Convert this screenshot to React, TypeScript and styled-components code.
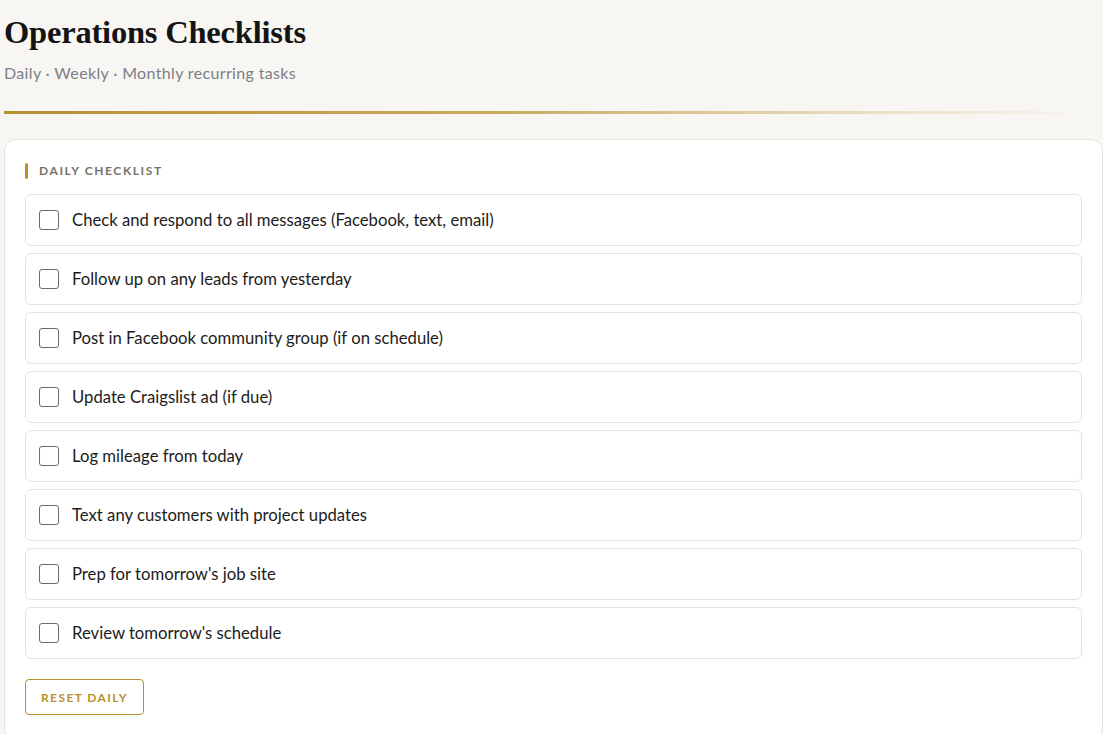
import React, { useState } from "react";
import styled, { createGlobalStyle } from "styled-components";

const GlobalStyle = createGlobalStyle`
  * { box-sizing: border-box; }
  html, body {
    margin: 0;
    padding: 0;
    background-color: #f8f6f2;
  }
  body {
    font-family: "Lato", "Noto Sans", sans-serif;
    color: #1c1c1c;
    overflow: hidden;
  }
`;

/* Page */
const Page = styled.div`
  display: flex;
  flex-direction: column;
  min-height: 100vh;
  padding: 0 0 0 4px;
`;

const Header = styled.header`
  display: flex;
  flex-direction: column;
  padding-top: 13px;
`;

const Title = styled.h1`
  margin: 0;
  font-family: "Liberation Serif", "DejaVu Serif", serif;
  font-weight: 700;
  font-size: 32.5px;
  line-height: 38px;
  color: #141414;
  letter-spacing: -0.2px;
`;

const Subtitle = styled.p`
  margin: 12px 0 0;
  font-size: 16px;
  line-height: 20px;
  letter-spacing: 0.35px;
  color: #7b7f86;
`;

const Divider = styled.div`
  height: 3px;
  margin: 28px 14px 0 0;
  background: linear-gradient(
    90deg,
    #b8902f 0%,
    #c9a95e 45%,
    rgba(220, 200, 150, 0.5) 80%,
    rgba(248, 246, 242, 0) 100%
  );
`;

/* Card */
const Card = styled.section`
  display: flex;
  flex-direction: column;
  margin-top: 25px;
  padding: 20px 20px 24px 20px;
  background-color: #fff;
  border: 1px solid #e7e3da;
  border-radius: 12px;
`;

const SectionLabel = styled.h2`
  display: flex;
  align-items: center;
  gap: 11px;
  margin: 3px 0 15px;
  font-size: 12px;
  font-weight: 700;
  letter-spacing: 1.6px;
  text-transform: uppercase;
  color: #77736b;
  line-height: 16px;

  &::before {
    content: "";
    display: block;
    width: 3px;
    height: 16px;
    border-radius: 2px;
    background-color: #b8902f;
  }
`;

const List = styled.ul`
  display: flex;
  flex-direction: column;
  gap: 7px;
  margin: 0;
  padding: 0;
  list-style: none;
`;

const Item = styled.li<{ done?: boolean }>`
  display: flex;
  align-items: center;
  gap: 13px;
  height: 52px;
  padding: 0 13px;
  border: 1px solid #e7e3da;
  border-radius: 6px;
  cursor: pointer;
  font-size: 16.7px;
  color: ${({ done }) => (done ? "#9a9a9a" : "#1c1c1c")};
  text-decoration: ${({ done }) => (done ? "line-through" : "none")};
`;

const Box = styled.span<{ checked?: boolean }>`
  display: flex;
  align-items: center;
  justify-content: center;
  width: 20px;
  height: 20px;
  flex-shrink: 0;
  border: 1.5px solid #6b6b6b;
  border-radius: 3px;
  background-color: ${({ checked }) => (checked ? "#b8902f" : "#fff")};
  border-color: ${({ checked }) => (checked ? "#b8902f" : "#6b6b6b")};
`;

const ResetButton = styled.button`
  align-self: flex-start;
  margin-top: 20px;
  height: 36px;
  padding: 0 15px;
  background: transparent;
  border: 1px solid #b8902f;
  border-radius: 4px;
  font-family: "Lato", "Noto Sans", sans-serif;
  font-size: 12px;
  font-weight: 700;
  letter-spacing: 1.4px;
  color: #b8902f;
  cursor: pointer;
`;

const tasks = [
  "Check and respond to all messages (Facebook, text, email)",
  "Follow up on any leads from yesterday",
  "Post in Facebook community group (if on schedule)",
  "Update Craigslist ad (if due)",
  "Log mileage from today",
  "Text any customers with project updates",
  "Prep for tomorrow's job site",
  "Review tomorrow's schedule",
];

export default function App() {
  const [done, setDone] = useState<boolean[]>(tasks.map(() => false));

  const toggle = (i: number) =>
    setDone((prev) => prev.map((v, j) => (j === i ? !v : v)));

  return (
    <>
      <GlobalStyle />
      <Page>
        <Header>
          <Title>Operations Checklists</Title>
          <Subtitle>Daily · Weekly · Monthly recurring tasks</Subtitle>
          <Divider />
        </Header>
        <Card>
          <SectionLabel>Daily Checklist</SectionLabel>
          <List>
            {tasks.map((t, i) => (
              <Item key={t} done={done[i]} onClick={() => toggle(i)}>
                <Box checked={done[i]}>
                  {done[i] && (
                    <svg width="12" height="12" viewBox="0 0 24 24" fill="none" stroke="#fff" strokeWidth="4" strokeLinecap="round" strokeLinejoin="round">
                      <path d="M20 6 9 17l-5-5" />
                    </svg>
                  )}
                </Box>
                {t}
              </Item>
            ))}
          </List>
          <ResetButton onClick={() => setDone(tasks.map(() => false))}>
            RESET DAILY
          </ResetButton>
        </Card>
      </Page>
    </>
  );
}
